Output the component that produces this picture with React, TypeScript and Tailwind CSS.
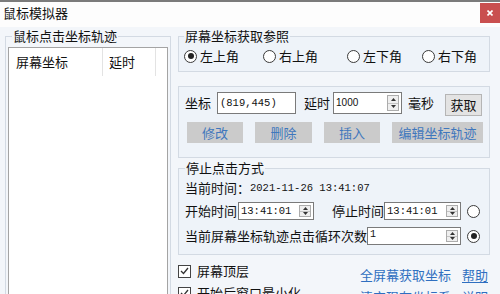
import React from 'react'

const cjk = "font-['Noto_Sans_CJK_SC','Noto_Sans',sans-serif]"
const mono = "font-['Liberation_Mono',monospace]"

function Spinner() {
  return (
    <div className="my-[2px] mr-[2px] w-[12px] shrink-0 flex flex-col border border-[#acacac] bg-[#efefef]">
      <div className="flex-1 flex items-center justify-center border-b border-[#c4c4c4]">
        <svg width="5" height="3" viewBox="0 0 5 3">
          <path d="M0 3 L2.5 0 L5 3 Z" fill="#333" />
        </svg>
      </div>
      <div className="flex-1 flex items-center justify-center">
        <svg width="5" height="3" viewBox="0 0 5 3">
          <path d="M0 0 L2.5 3 L5 0 Z" fill="#333" />
        </svg>
      </div>
    </div>
  )
}

function Radio({ checked }: { checked?: boolean }) {
  return (
    <span className="w-[13px] h-[13px] shrink-0 rounded-full border border-[#3a3a3a] bg-white flex items-center justify-center">
      {checked && <span className="w-[6px] h-[6px] rounded-full bg-[#222]" />}
    </span>
  )
}

function Checkbox() {
  return (
    <span className="w-[13px] h-[13px] shrink-0 border border-[#444] bg-white flex items-center justify-center">
      <svg width="9" height="8" viewBox="0 0 9 8">
        <path d="M1 4 L3.5 6.5 L8 1" stroke="#333" strokeWidth="1.3" fill="none" />
      </svg>
    </span>
  )
}

function BlueButton({ label, w }: { label: string; w: string }) {
  return (
    <button className={`${w} h-[21px] bg-[#cbcbcb] text-[#3f77bd] text-[13px] leading-[14px] flex items-center justify-center`}>
      {label}
    </button>
  )
}

export default function App() {
  return (
    <div className={`w-[500px] h-[294px] overflow-hidden bg-[#f3f6fa] text-[13px] leading-[14px] text-[#111] ${cjk}`}>
      {/* Title bar */}
      <div className="h-[2px] bg-[#7b7b7b]" />
      <div className="h-[25px] flex items-start justify-between bg-[#fdfdfd] pl-[3px]">
        <span className="pt-[4px]">鼠标模拟器</span>
        <button className="mt-[1px] w-[20px] h-[20px] bg-[#c94f4f] flex items-center justify-center">
          <svg width="6" height="6" viewBox="0 0 6 6">
            <path d="M0.5 0.5 L5.5 5.5 M5.5 0.5 L0.5 5.5" stroke="#fff" strokeWidth="1.6" />
          </svg>
        </button>
      </div>

      {/* Body */}
      <div className="flex pl-[5px] pt-[2px] gap-[7px]">
        {/* Track list */}
        <fieldset className="w-[166px] h-[280px] min-w-0 border border-[#d3dae3] px-[2px]">
          <legend className="ml-[4px] px-[1px]">鼠标点击坐标轨迹</legend>
          <div className="mt-[4px] h-[260px] bg-white border border-[#a4a4a4]">
            <div className="h-[28px] flex items-center">
              <div className="w-[94px] h-full pl-[7px] flex items-center border-r border-[#e3e3e3]">屏幕坐标</div>
              <div className="w-[53px] h-full pl-[6px] flex items-center border-r border-[#e3e3e3]">延时</div>
            </div>
          </div>
        </fieldset>

        {/* Right column */}
        <div className="w-[312px] flex flex-col">
          <fieldset className="border border-[#d3dae3] bg-[#eef3f9] pl-[5px] pt-[6px] pb-[8px]">
            <legend className="px-[1px]">屏幕坐标获取参照</legend>
            <div className="grid grid-cols-[79px_84px_75px_auto]">
              {['左上角', '右上角', '左下角', '右下角'].map((t, i) => (
                <label key={t} className="flex items-center gap-[3px]">
                  <Radio checked={i === 0} />
                  <span>{t}</span>
                </label>
              ))}
            </div>
          </fieldset>

          {/* Coordinate editor */}
          <div className="mt-[14px] h-[72px] border border-[#d3dae3] bg-[#eef3f9] px-[6px] pt-[5px]">
            <div className="h-[22px] flex items-center">
              <span>坐标</span>
              <div className="ml-[6px] w-[79px] h-[22px] bg-white border border-[#7a7a7a] flex items-center pl-[2px]">
                <span className={`${mono} text-[10.5px]`}>(819,445)</span>
              </div>
              <span className="ml-[8px]">延时</span>
              <div className="ml-[3px] w-[69px] h-[22px] bg-white border border-[#7a7a7a] flex items-stretch">
                <span className="flex-1 flex items-center pl-[2px] font-['Liberation_Sans',sans-serif] text-[10px]">1000</span>
                <Spinner />
              </div>
              <span className="ml-[6px]">毫秒</span>
              <button className="ml-[11px] mt-[3px] w-[37px] h-[22px] bg-[#e3e3e3] border border-[#b5b5b5] flex items-center justify-center">
                获取
              </button>
            </div>
            <div className="mt-[8px] ml-[2px] flex justify-between">
              <BlueButton label="修改" w="w-[56px]" />
              <BlueButton label="删除" w="w-[57px]" />
              <BlueButton label="插入" w="w-[56px]" />
              <BlueButton label="编辑坐标轨迹" w="w-[91px]" />
            </div>
          </div>

          {/* Stop mode */}
          <fieldset className="mt-[3px] border border-[#d3dae3] bg-[#eef3f9] pl-[6px] pt-[6px] pb-[9px]">
            <legend className="px-[1px]">停止点击方式</legend>
            <div className="flex items-center">
              <span>当前时间：</span>
              <span className={`${mono} text-[10.5px]`}>2021-11-26 13:41:07</span>
            </div>
            <div className="mt-[7px] h-[18px] flex items-center">
              <span>开始时间</span>
              <div className="ml-[1px] w-[76px] h-[18px] bg-white border border-[#7a7a7a] flex items-stretch">
                <span className={`flex-1 flex items-center pl-[2px] ${mono} text-[10.5px]`}>13:41:01</span>
                <Spinner />
              </div>
              <span className="ml-[18px]">停止时间</span>
              <div className="w-[77px] h-[18px] bg-white border border-[#7a7a7a] flex items-stretch">
                <span className={`flex-1 flex items-center pl-[2px] ${mono} text-[10.5px]`}>13:41:01</span>
                <Spinner />
              </div>
              <span className="ml-[6px]">
                <Radio />
              </span>
            </div>
            <div className="mt-[7px] h-[18px] flex items-center">
              <span>当前屏幕坐标轨迹点击循环次数</span>
              <div className="w-[94px] h-[18px] bg-white border border-[#7a7a7a] flex items-stretch">
                <span className={`flex-1 flex items-start pl-[2px] ${mono} text-[10px]`}>1</span>
                <Spinner />
              </div>
              <span className="ml-[6px]">
                <Radio checked />
              </span>
            </div>
          </fieldset>

          {/* Options and links */}
          <div className="mt-[9px] h-[22px] flex items-start">
            <label className="w-[182px] flex items-center gap-[6px]">
              <Checkbox />
              <span>屏幕顶层</span>
            </label>
            <a className="mt-[4px] w-[102px] text-[#2f6fc0]">全屏幕获取坐标</a>
            <a className="mt-[4px] text-[#2f6fc0] underline underline-offset-2">帮助</a>
          </div>
          <div className="h-[22px] flex items-start">
            <label className="w-[182px] flex items-center gap-[6px]">
              <Checkbox />
              <span>开始后窗口最小化</span>
            </label>
            <a className="mt-[4px] w-[102px] text-[#2f6fc0]">清空现有坐标系</a>
            <a className="mt-[4px] text-[#2f6fc0]">说明</a>
          </div>
        </div>
      </div>
    </div>
  )
}
